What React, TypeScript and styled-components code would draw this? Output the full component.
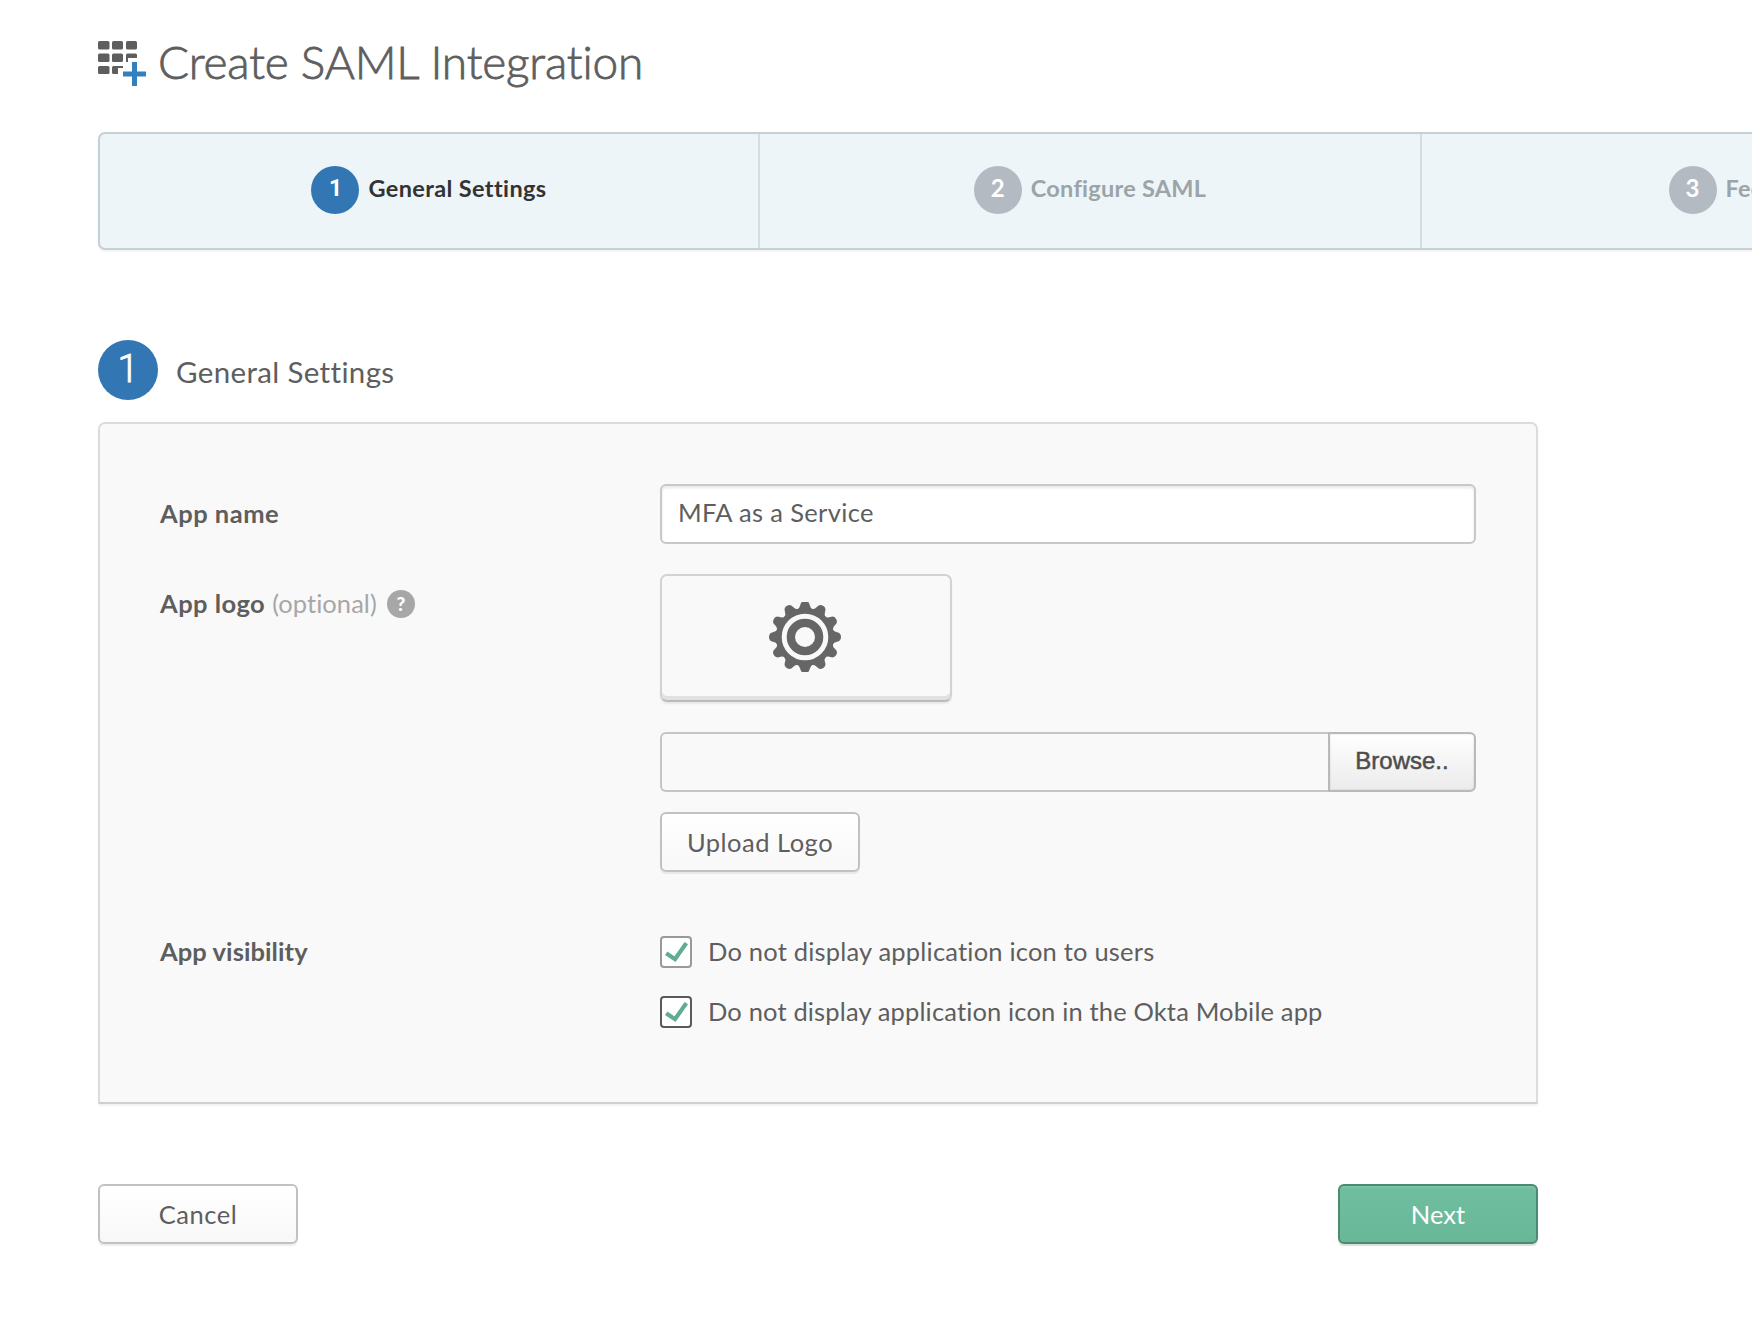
import React, { useState } from "react";
import styled, { createGlobalStyle } from "styled-components";

const GlobalStyle = createGlobalStyle`
  *, *::before, *::after { box-sizing: border-box; }
  html, body { margin: 0; padding: 0; }
  body {
    background: #fff;
    color: #5e5e5e;
    font-family: Lato, "Open Sans", "Liberation Sans", sans-serif;
    font-size: 25.5px;
    font-variant-ligatures: none;
    overflow: hidden;
  }
  button, input { font: inherit; color: inherit; margin: 0; }
`;

/* Text whose rendered length is tuned by tracking and nudged on its baseline. */
const Text = styled.span<{ $track?: number; $drop?: number }>`
  display: block;
  white-space: nowrap;
  letter-spacing: ${(p) => p.$track ?? 0}px;
  padding-top: ${(p) => Math.max(p.$drop ?? 0, 0)}px;
  padding-bottom: ${(p) => Math.max(-(p.$drop ?? 0), 0)}px;
`;

const Page = styled.main`
  width: 1752px;
  height: 1322px;
  padding: 32px 0 0 98px;
  overflow: hidden;
`;

const Header = styled.header`
  display: flex;
  align-items: flex-start;
  height: 100px;
  gap: 10px;
`;

const TitleIcon = styled.svg`
  display: block;
  flex: none;
  margin-top: 8px;
`;

const Title = styled.h1`
  margin: 0;
  font-size: 46px;
  font-weight: 300;
  line-height: 60px;
  -webkit-text-stroke: 0.8px #5e5e5e;
`;

const Steps = styled.ol`
  display: grid;
  grid-template-columns: 660px 662px 652px;
  width: 1978px;
  height: 118px;
  margin: 0;
  padding: 0;
  list-style: none;
  background: #edf5f8;
  border: 2px solid #c5d0d5;
  border-radius: 7px;
  box-shadow: 0 2px 2px rgba(0, 0, 0, 0.05);
`;

const Step = styled.li<{ $active?: boolean }>`
  display: flex;
  align-items: flex-start;
  justify-content: center;
  gap: 9px;
  padding-top: 32px;
  border-right: 2px solid #d3dee2;
  color: ${(p) => (p.$active ? "#333" : "#9ca4a7")};
  font-size: 23.5px;
  font-weight: 700;
  line-height: 44px;
  &:last-child { border-right: 0; }
`;

const StepNumber = styled.span<{ $active?: boolean }>`
  flex: none;
  width: 48px;
  height: 48px;
  border-radius: 50%;
  background: ${(p) => (p.$active ? "#3276b3" : "#b3bac2")};
  color: #fff;
  font-family: ${(p) => (p.$active ? "Roboto" : "Lato")}, sans-serif;
  font-size: ${(p) => (p.$active ? 23 : 24)}px;
  line-height: ${(p) => (p.$active ? 45 : 44)}px;
  text-align: center;
`;

const SectionHeading = styled.div`
  display: flex;
  align-items: center;
  gap: 18px;
  height: 60px;
  margin-top: 90px;
`;

const SectionNumber = styled.span`
  flex: none;
  width: 60px;
  height: 60px;
  border-radius: 50%;
  background: #3276b3;
  color: #fff;
  font-family: Roboto, sans-serif;
  font-size: 38px;
  font-weight: 300;
  line-height: 59px;
  text-align: center;
  -webkit-text-stroke: 0.8px #fff;
`;

const SectionTitle = styled.h2`
  margin: 0;
  font-size: 29.5px;
  font-weight: 400;
  line-height: 60px;
`;

const Panel = styled.section`
  display: flex;
  flex-direction: column;
  width: 1440px;
  height: 682px;
  margin-top: 22px;
  padding: 60px 60px 0;
  background: #f9f9f9;
  border: 2px solid #dcdcdc;
  border-bottom-color: #cfcfcf;
  border-radius: 7px 7px 0 0;
  box-shadow: 0 2px 2px rgba(0, 0, 0, 0.05);
`;

const FieldRow = styled.div<{ $top?: number }>`
  display: grid;
  grid-template-columns: 500px 816px;
  margin-top: ${(p) => p.$top ?? 0}px;
`;

const FieldLabel = styled.div`
  display: flex;
  align-items: center;
  height: 60px;
  font-weight: 700;
`;

const Optional = styled.span`
  margin-left: 7px;
  color: #a7a7a7;
  font-weight: 400;
`;

const HelpBadge = styled.span`
  display: flex;
  align-items: center;
  justify-content: center;
  width: 28px;
  height: 28px;
  margin-left: 10px;
  border-radius: 50%;
  background: #a7a7a7;
  color: #fff;
  font-size: 19px;
  font-weight: 900;
  line-height: 28px;
`;

const FieldBody = styled.div`
  display: flex;
  flex-direction: column;
  align-items: flex-start;
`;

const TextInput = styled.input`
  width: 816px;
  height: 60px;
  padding: 0 16px 4px;
  background: #fff;
  border: 2px solid #c8c8c8;
  border-radius: 6px;
  box-shadow: inset 0 2px 3px rgba(0, 0, 0, 0.09);
  letter-spacing: 0.35px;
  outline: none;
`;

const LogoTile = styled.div`
  display: flex;
  align-items: center;
  justify-content: center;
  width: 292px;
  height: 128px;
  padding: 0 2px 2px 0;
  border: 2px solid #d2d2d2;
  border-bottom-color: #bbb;
  border-radius: 7px;
  box-shadow: inset 0 -4px 0 #e1e1e1, 0 2px 2px rgba(0, 0, 0, 0.07);
`;

const FilePicker = styled.div`
  display: flex;
  width: 816px;
  height: 60px;
  margin-top: 30px;
`;

const FilePath = styled.div`
  flex: 1;
  border: 2px solid #c5c5c5;
  border-right: 0;
  border-radius: 6px 0 0 6px;
`;

const BrowseButton = styled.button`
  width: 148px;
  height: 60px;
  padding: 0 0 2px;
  border: 2px solid #b9b9b9;
  border-radius: 0 6px 6px 0;
  background: linear-gradient(#fff, #ebebeb);
  box-shadow: inset 0 0 2px rgba(0, 0, 0, 0.15);
  color: #4d4d4d;
  font-family: "Liberation Sans", Arial, sans-serif;
  font-size: 24px;
  -webkit-text-stroke: 0.5px #4d4d4d;
`;

const Button = styled.button<{ $primary?: boolean }>`
  display: flex;
  align-items: center;
  justify-content: center;
  width: 200px;
  height: 60px;
  padding: 0;
  border: 2px solid ${(p) => (p.$primary ? "#4b8b71" : "#c1c1c1")};
  border-radius: 6px;
  background: ${(p) =>
    p.$primary ? "linear-gradient(#6ebe9f, #68b798)" : "linear-gradient(#fff, #f8f8f8)"};
  box-shadow: ${(p) =>
    p.$primary
      ? "inset 0 2px 0 #7ac4a7, 0 2px 1px rgba(0,0,0,0.14)"
      : "0 2px 1px rgba(0,0,0,0.07)"};
  color: ${(p) => (p.$primary ? "#fff" : "#5e5e5e")};
`;

const UploadSlot = styled.div`
  margin-top: 20px;
`;

const CheckList = styled.div`
  display: flex;
  flex-direction: column;
`;

const CheckRow = styled.label`
  display: flex;
  align-items: center;
  gap: 16px;
  height: 60px;
`;

const HiddenCheck = styled.input`
  appearance: none;
  width: 0;
  height: 0;
  margin: 0 -16px 0 0;
`;

const CheckBox = styled.span<{ $strong?: boolean }>`
  display: block;
  width: 32px;
  height: 32px;
  border: 2px solid ${(p) => (p.$strong ? "#5a5a5a" : "#999")};
  border-radius: 4px;
  background: #fff;
`;

const Tick = styled.svg`
  display: block;
`;

const Actions = styled.footer`
  display: flex;
  justify-content: space-between;
  width: 1440px;
  margin-top: 80px;
`;

const AppGridIcon = () => (
  <TitleIcon width="50" height="50" viewBox="0 0 50 50">
    <g fill="#5e5e5e">
      <rect x="0" y="1" width="11.500" height="8.500" rx="1.500" />
      <rect x="14" y="1" width="11" height="8.500" rx="1.500" />
      <rect x="28" y="1" width="11" height="8.500" rx="1.500" />
      <rect x="0" y="13.500" width="11.500" height="8.500" rx="1.500" />
      <rect x="14" y="13.500" width="11" height="8.500" rx="1.500" />
      <path d="M29.500 13.500h8a1.500 1.500 0 0 1 1.500 1.500v3H30V22H28V15a1.500 1.500 0 0 1 1.500-1.500z" />
      <rect x="0" y="26" width="11.500" height="8" rx="1.500" />
      <path d="M15.500 26H25v2h-5v6h-4.500a1.500 1.500 0 0 1-1.500-1.500v-5A1.500 1.500 0 0 1 15.500 26z" />
    </g>
    <path d="M34 22h5v9.500H48v5h-9V46h-5v-9.500H25v-5h9z" fill="#3480bf" />
  </TitleIcon>
);

const teeth = Array.from({ length: 12 }, (_, i) => i * 30);

const GearIcon = () => (
  <svg width="72" height="70" viewBox="-36 -35 72 70">
    <g fill="#666">
      {teeth.map((angle) => (
        <path
          key={angle}
          d="M-8.500 -27 Q-5 -29 -4.700 -32 Q-4 -36 0 -36 Q4 -36 4.700 -32 Q5 -29 8.500 -27z"
          transform={`rotate(${angle})`}
        />
      ))}
      <circle r="29" />
    </g>
    <circle r="20.800" fill="none" stroke="#f9f9f9" strokeWidth="5" />
    <circle r="10" fill="#f9f9f9" />
  </svg>
);

const CheckMark = () => (
  <Tick width="28" height="28" viewBox="0 0 28 28">
    <path d="M4.200 15.300L13 21.200L24.300 5.100" fill="none" stroke="#5fae92" strokeWidth="4.200" />
  </Tick>
);

const steps = [
  { label: "General Settings", track: 0.37 },
  { label: "Configure SAML", track: 0.25 },
  { label: "Feedback", track: 0.25 },
];

const visibility = [
  { label: "Do not display application icon to users", strong: false, track: 0.2 },
  { label: "Do not display application icon in the Okta Mobile app", strong: true, track: 0.15 },
];

export default function App() {
  const [name, setName] = useState("MFA as a Service");
  const [checked, setChecked] = useState([true, true]);
  const toggle = (i: number) => setChecked(checked.map((c, j) => (i === j ? !c : c)));

  return (
    <>
      <GlobalStyle />
      <Page>
        <Header>
          <AppGridIcon />
          <Title><Text $track={-0.17}>Create SAML Integration</Text></Title>
        </Header>

        <Steps>
          {steps.map((step, i) => (
            <Step key={step.label} $active={i === 0}>
              <StepNumber $active={i === 0}>{i + 1}</StepNumber>
              <Text $track={step.track}>{step.label}</Text>
            </Step>
          ))}
        </Steps>

        <SectionHeading>
          <SectionNumber>1</SectionNumber>
          <SectionTitle><Text $track={0.35} $drop={3}>General Settings</Text></SectionTitle>
        </SectionHeading>

        <Panel>
          <FieldRow>
            <FieldLabel><Text $track={0.5} $drop={-3}>App name</Text></FieldLabel>
            <FieldBody>
              <TextInput value={name} onChange={(e) => setName(e.target.value)} />
            </FieldBody>
          </FieldRow>

          <FieldRow $top={30}>
            <FieldLabel>
              <Text $track={0.45} $drop={-3}>App logo</Text>
              <Optional><Text $track={0.05} $drop={-3}>(optional)</Text></Optional>
              <HelpBadge>?</HelpBadge>
            </FieldLabel>
            <FieldBody>
              <LogoTile><GearIcon /></LogoTile>
              <FilePicker>
                <FilePath />
                <BrowseButton type="button">Browse..</BrowseButton>
              </FilePicker>
              <UploadSlot>
                <Button type="button"><Text $track={0.5}>Upload Logo</Text></Button>
              </UploadSlot>
            </FieldBody>
          </FieldRow>

          <FieldRow $top={50}>
            <FieldLabel><Text $track={0.08} $drop={-3}>App visibility</Text></FieldLabel>
            <CheckList>
              {visibility.map((item, i) => (
                <CheckRow key={item.label}>
                  <HiddenCheck type="checkbox" checked={checked[i]} onChange={() => toggle(i)} />
                  <CheckBox $strong={item.strong}>{checked[i] && <CheckMark />}</CheckBox>
                  <Text $track={item.track} $drop={-3}>{item.label}</Text>
                </CheckRow>
              ))}
            </CheckList>
          </FieldRow>
        </Panel>

        <Actions>
          <Button type="button"><Text $track={0.55}>Cancel</Text></Button>
          <Button type="button" $primary><Text $track={0.05}>Next</Text></Button>
        </Actions>
      </Page>
    </>
  );
}
